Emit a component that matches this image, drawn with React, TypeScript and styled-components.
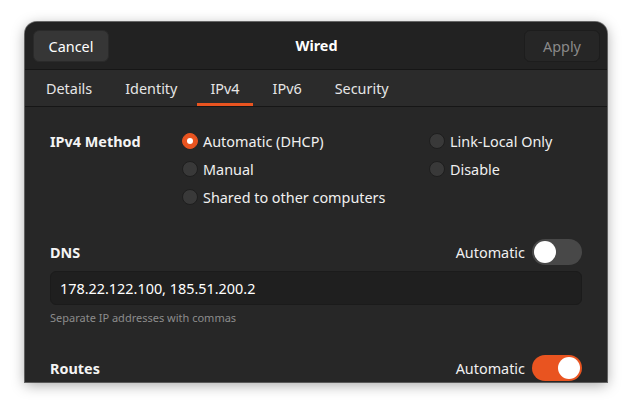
import React from 'react';
import styled, { createGlobalStyle } from 'styled-components';

const GlobalStyle = createGlobalStyle`
  html, body {
    margin: 0;
    padding: 0;
    background: #ffffff;
  }
  body {
    font-family: "Noto Sans", "Open Sans", sans-serif;
    -webkit-font-smoothing: antialiased;
  }
`;

const Page = styled.div`
  width: 632px;
  height: 411px;
  padding: 22px 25px 0 25px;
  box-sizing: border-box;
  overflow: hidden;
`;

const Window = styled.div`
  width: 582px;
  height: 360px;
  display: flex;
  flex-direction: column;
  background: #272727;
  border-radius: 12px 12px 0 0;
  overflow: hidden;
  box-shadow: 0 3px 14px rgba(0, 0, 0, 0.35), 0 0 0 1px rgba(0, 0, 0, 0.55);
  color: #ffffff;
  font-size: 14.4px;
`;

const HeaderBar = styled.div`
  height: 47px;
  flex-shrink: 0;
  display: flex;
  align-items: center;
  justify-content: space-between;
  padding: 0 7px 0 8px;
  background: #222222;
  border-bottom: 1px solid #161616;
`;

const HeaderButton = styled.button<{ disabled?: boolean }>`
  width: 76px;
  height: 32px;
  border-radius: 6px;
  border: 1px solid ${(p) => (p.disabled ? '#1d1d1d' : '#2a2a2a')};
  background: ${(p) => (p.disabled ? '#262626' : '#363636')};
  color: ${(p) => (p.disabled ? '#8a8a8a' : '#ffffff')};
  font-family: inherit;
  font-size: 14.4px;
  padding: 0;
  margin-top: 1px;
`;

const Title = styled.div`
  font-weight: 700;
`;

const TabBar = styled.div`
  height: 36px;
  flex-shrink: 0;
  display: flex;
  gap: 7px;
  padding: 0 8px;
  background: #2b2b2b;
  border-bottom: 1px solid #161616;
`;

const Tab = styled.div<{ active?: boolean }>`
  display: flex;
  align-items: center;
  padding: 0 13px;
  color: #e6e6e6;
  box-shadow: ${(p) => (p.active ? 'inset 0 -3px 0 #e95420' : 'none')};
`;

const Content = styled.div`
  flex: 1;
  padding: 20px 25px 0 25px;
  display: flex;
  flex-direction: column;
`;

const MethodGrid = styled.div`
  display: grid;
  grid-template-columns: 132px 247px 1fr;
  grid-auto-rows: 28px;
`;

const SectionLabel = styled.div`
  display: flex;
  align-items: center;
  font-weight: 700;
  color: #f4f4f4;
`;

const RadioRow = styled.label`
  display: flex;
  align-items: center;
  gap: 5px;
  color: #f0f0f0;
`;

const RadioDot = styled.span<{ checked?: boolean }>`
  width: 16px;
  height: 16px;
  border-radius: 50%;
  box-sizing: border-box;
  display: flex;
  align-items: center;
  justify-content: center;
  background: ${(p) => (p.checked ? '#e95420' : '#393939')};
  border: 1px solid ${(p) => (p.checked ? '#e95420' : '#1e1e1e')};
  &::after {
    content: '';
    width: 6px;
    height: 6px;
    border-radius: 50%;
    background: #ffffff;
    display: ${(p) => (p.checked ? 'block' : 'none')};
  }
`;

const SectionHeader = styled.div<{ top: number }>`
  display: flex;
  align-items: center;
  justify-content: space-between;
  height: 26px;
  margin-top: ${(p) => p.top}px;
`;

const SwitchGroup = styled.div`
  display: flex;
  align-items: center;
  gap: 7px;
  color: #f0f0f0;
`;

const Switch = styled.div<{ on?: boolean }>`
  width: 50px;
  height: 26px;
  border-radius: 13px;
  box-sizing: border-box;
  padding: 2px;
  display: flex;
  justify-content: ${(p) => (p.on ? 'flex-end' : 'flex-start')};
  background: ${(p) => (p.on ? '#e95420' : '#484848')};
  &::after {
    content: '';
    width: 22px;
    height: 22px;
    border-radius: 50%;
    background: #ffffff;
  }
`;

const Entry = styled.div`
  margin-top: 6px;
  height: 34px;
  box-sizing: border-box;
  border: 1px solid #1b1b1b;
  border-radius: 6px;
  background: #1f1f1f;
  display: flex;
  align-items: center;
  padding: 0 9px;
  color: #ffffff;
`;

const Hint = styled.div`
  margin-top: 6px;
  font-size: 11px;
  line-height: 14px;
  color: #8c8c8c;
`;

const Radio: React.FC<{ label: string; checked?: boolean }> = ({ label, checked }) => (
  <RadioRow>
    <RadioDot checked={checked} />
    {label}
  </RadioRow>
);

const App: React.FC = () => {
  const tabs = ['Details', 'Identity', 'IPv4', 'IPv6', 'Security'];

  return (
    <Page>
      <GlobalStyle />
      <Window>
        <HeaderBar>
          <HeaderButton>Cancel</HeaderButton>
          <Title>Wired</Title>
          <HeaderButton disabled>Apply</HeaderButton>
        </HeaderBar>

        <TabBar>
          {tabs.map((t) => (
            <Tab key={t} active={t === 'IPv4'}>
              {t}
            </Tab>
          ))}
        </TabBar>

        <Content>
          <MethodGrid>
            <SectionLabel>IPv4 Method</SectionLabel>
            <Radio label="Automatic (DHCP)" checked />
            <Radio label="Link-Local Only" />
            <div />
            <Radio label="Manual" />
            <Radio label="Disable" />
            <div />
            <Radio label="Shared to other computers" />
          </MethodGrid>

          <SectionHeader top={28}>
            <SectionLabel>DNS</SectionLabel>
            <SwitchGroup>
              Automatic
              <Switch />
            </SwitchGroup>
          </SectionHeader>
          <Entry>178.22.122.100, 185.51.200.2</Entry>
          <Hint>Separate IP addresses with commas</Hint>

          <SectionHeader top={30}>
            <SectionLabel>Routes</SectionLabel>
            <SwitchGroup>
              Automatic
              <Switch on />
            </SwitchGroup>
          </SectionHeader>
        </Content>
      </Window>
    </Page>
  );
};

export default App;
